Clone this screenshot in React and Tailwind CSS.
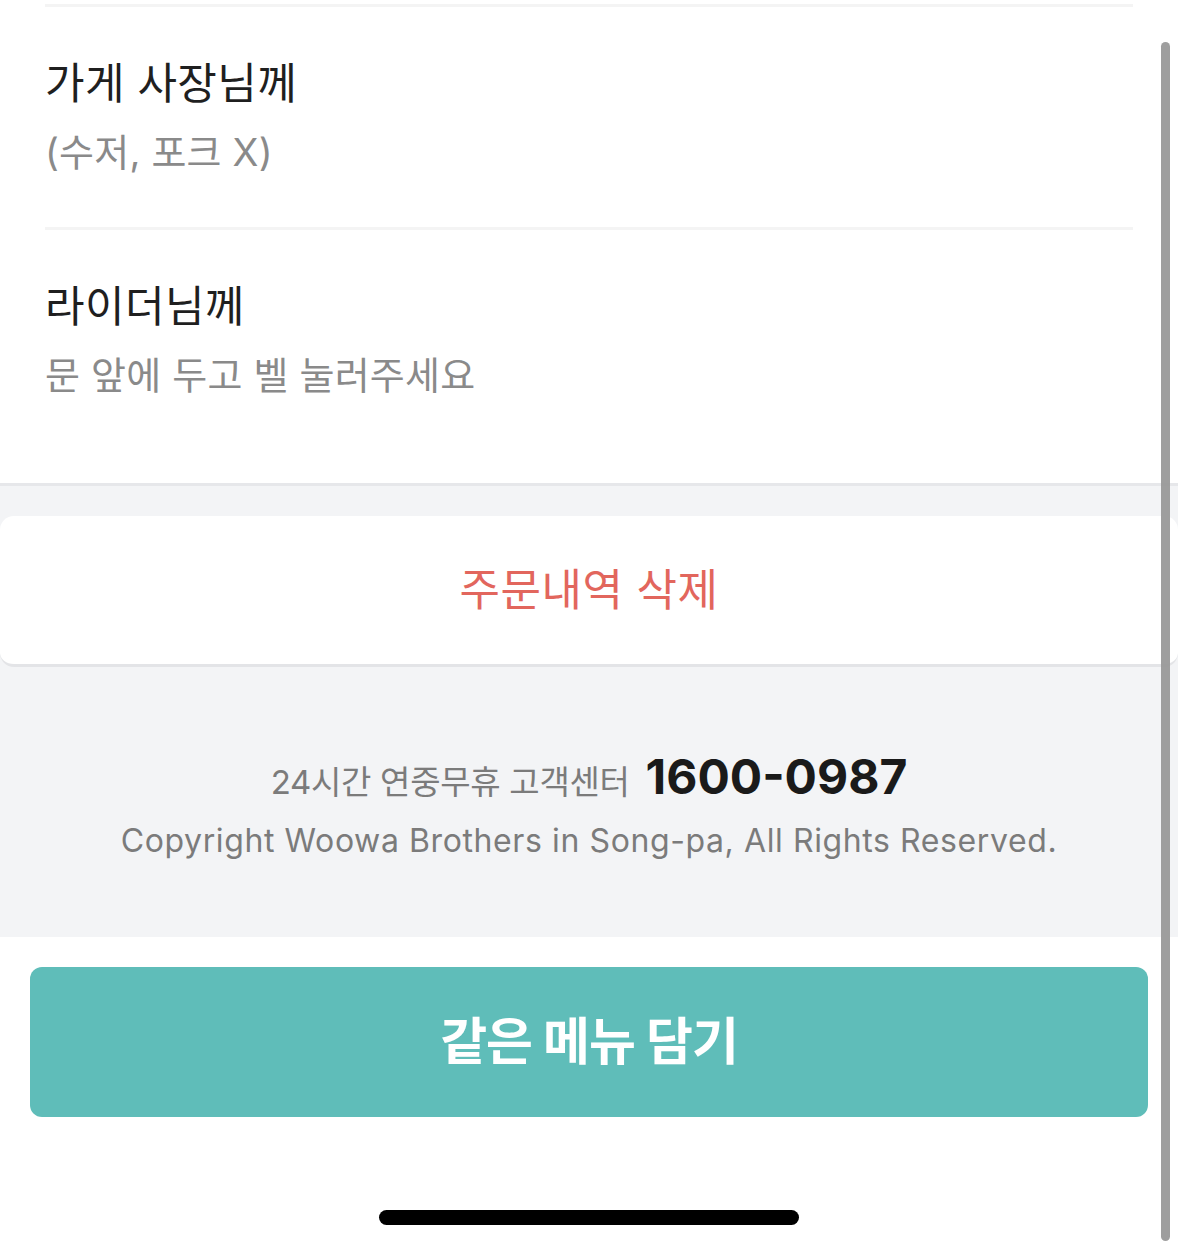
import React from 'react';

const font = "font-['Inter','Noto_Sans_CJK_KR',sans-serif]";

const RequestRow = ({ title, body, last }) => (
  <div className={`mx-[45px] ${last ? 'pt-[50px] pb-[85px]' : 'pt-[50px] pb-[52px] border-b-[3px] border-[#f4f4f4]'}`}>
    <div className="text-[43px] leading-[52px] text-[#1f1f1f] tracking-[0.4px]">{title}</div>
    <div className="mt-[20px] text-[38px] leading-[46px] text-[#8a8a8a] tracking-[0.2px]">{body}</div>
  </div>
);

export default function App() {
  return (
    <div className={`relative w-[1178px] h-[1249px] overflow-hidden bg-white ${font}`}>
      <div className="mx-[45px] mt-[4px] h-[3px] bg-[#f4f4f4]" />

      <div className="bg-white border-b-[3px] border-[#e6e7ea]">
        <RequestRow title="가게 사장님께" body="(수저, 포크 X)" />
        <RequestRow title="라이더님께" body="문 앞에 두고 벨 눌러주세요" last />
      </div>

      <div className="bg-[#f3f4f6] pt-[30px]">
        <button className="w-full h-[151px] bg-white rounded-[14px] border-b-[3px] border-[#e3e4e7] flex items-center justify-center text-[44px] text-[#e2665d] tracking-[0.5px]">
          주문내역 삭제
        </button>

        <div className="h-[270px] flex flex-col items-center pt-[74px]">
          <div className="flex items-baseline gap-[16px]">
            <span className="text-[33px] text-[#7b7b7b] tracking-[-0.3px]">24시간 연중무휴 고객센터</span>
            <span className="text-[48px] font-bold text-[#1a1a1a] tracking-[0px]">1600-0987</span>
          </div>
          <div className="mt-[4px] text-[32px] text-[#7b7b7b] tracking-[0.6px]">
            Copyright Woowa Brothers in Song-pa, All Rights Reserved.
          </div>
        </div>
      </div>

      <div className="px-[30px] pt-[30px]">
        <button className="w-full h-[150px] rounded-[12px] bg-[#5fbdb9] flex items-center justify-center text-[51px] font-bold text-white tracking-[-1px]">
          같은 메뉴 담기
        </button>
      </div>

      <div className="flex justify-center mt-[93px]">
        <div className="w-[420px] h-[15px] rounded-full bg-black" />
      </div>

      <div className="absolute right-[8px] top-[42px] bottom-[8px] w-[9px] rounded-full bg-[#999]/95" />
    </div>
  );
}
